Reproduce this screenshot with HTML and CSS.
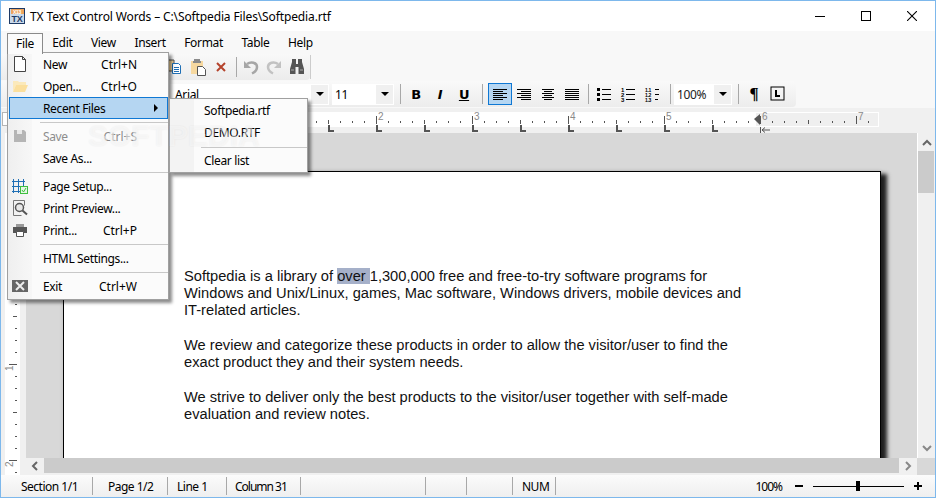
FILE: index.html
```html
<!DOCTYPE html>
<html lang="en">

<head>
    <meta charset="UTF-8" />
    <title>TX Text Control Words</title>
    <link rel="stylesheet" href="styles.css">
</head>

<body>
    <div class="window">
        <div class="titlebar">
            <svg class="app-icon" width="16" height="16" viewBox="0 0 16 16">
                <rect x="0.5" y="0.5" width="15" height="15" fill="#c9d9ea" stroke="#1d3a66" />
                <rect x="2" y="1" width="13" height="5" fill="#eda45c" />
                <text x="8" y="5.5" class="app-icon-year">X13</text>
                <text x="8" y="14" class="app-icon-text">TX</text>
            </svg>
            <span class="title-text">TX Text Control Words – C:\Softpedia Files\Softpedia.rtf</span>
            <div class="win-controls">
                <div class="win-btn"><svg width="10" height="10"><path d="M0 5.5h10" stroke="#000" /></svg></div>
                <div class="win-btn"><svg width="10" height="10"><rect x="0.5" y="0.5" width="9" height="9" fill="none" stroke="#000" /></svg></div>
                <div class="win-btn"><svg width="10" height="10"><path d="M0 0l10 10M10 0l-10 10" stroke="#000" stroke-width="1.1" /></svg></div>
            </div>
        </div>

        <div class="menubar">
            <div class="menu-title open">File</div>
            <div class="menu-title">Edit</div>
            <div class="menu-title">View</div>
            <div class="menu-title">Insert</div>
            <div class="menu-title">Format</div>
            <div class="menu-title">Table</div>
            <div class="menu-title">Help</div>
        </div>

        <div class="toolbar-row row-main">
            <div class="toolbar toolbar-main">
                <div class="tb-btn">
                    <svg width="16" height="16" viewBox="0 0 16 16">
                        <path d="M1 1h6v11H1z" fill="#f7d9a0" stroke="#555" />
                        <path d="M5.5 4.5h6l2 2v8h-8z" fill="#fff" stroke="#1f6fb5" />
                        <path d="M7 8.5h5M7 10.5h5M7 12.5h5" stroke="#1f6fb5" />
                    </svg>
                </div>
                <div class="tb-btn">
                    <svg width="16" height="18" viewBox="0 0 16 18">
                        <path d="M1 3h12v13H1z" fill="#f7d9a0" />
                        <path d="M4 3V1h6v2h1v2H3V3z" fill="#8b8b8b" />
                        <path d="M7.5 8.5h5l3 3v6h-8z" fill="#fff" stroke="#555" />
                    </svg>
                </div>
                <div class="tb-btn">
                    <svg width="12" height="12" viewBox="0 0 12 12"><path d="M2 2l8 8M10 2l-8 8" stroke="#b5432c" stroke-width="2" /></svg>
                </div>
                <div class="sep sep-main"></div>
                <div class="tb-btn">
                    <svg width="16" height="16" viewBox="0 0 16 16">
                        <path d="M1 2v7h7z" fill="#a6a6a6" />
                        <path d="M4 5c4-3 10-1.500 10 3 0 3-2 5-5 6.500" stroke="#a6a6a6" stroke-width="2.500" fill="none" />
                    </svg>
                </div>
                <div class="tb-btn">
                    <svg width="16" height="16" viewBox="0 0 16 16">
                        <path d="M15 2v7H8z" fill="#c2c2c2" />
                        <path d="M12 5C8 2 2 3.500 2 8c0 3 2 5 5 6.500" stroke="#c2c2c2" stroke-width="2.500" fill="none" />
                    </svg>
                </div>
                <div class="tb-btn">
                    <svg width="16" height="16" viewBox="0 0 16 16">
                        <path d="M3 0h4v5h2V0h4v3l2 7v5H9.500V8h-3v7H1v-5l2-7z" fill="#555" />
                        <path d="M2 11h3M11 11h3" stroke="#aaa" />
                    </svg>
                </div>
                <div class="sep sep-end"></div>
            </div>
        </div>

        <div class="toolbar-row row-format">
            <div class="toolbar toolbar-format">
                <div class="combo combo-font"><span>Arial</span><div class="combo-btn"><i class="caret"></i></div></div>
                <div class="combo combo-size"><span>11</span><div class="combo-btn"><i class="caret"></i></div></div>
                <div class="sep"></div>
                <div class="tb-btn glyph-b">B</div>
                <div class="tb-btn glyph-i">I</div>
                <div class="tb-btn glyph-u">U</div>
                <div class="sep sep-wide"></div>
                <div class="tb-btn active">
                    <svg width="16" height="16"><path d="M1 3.500h14M1 5.500h10M1 7.500h14M1 9.500h10M1 11.500h14M1 13.500h10" stroke="#000" /></svg>
                </div>
                <div class="tb-btn">
                    <svg width="16" height="16"><path d="M1 3.500h14M5 5.500h10M1 7.500h14M5 9.500h10M1 11.500h14M5 13.500h10" stroke="#000" /></svg>
                </div>
                <div class="tb-btn">
                    <svg width="16" height="16"><path d="M2 3.500h12M4 5.500h8M2 7.500h12M4 9.500h8M2 11.500h12M4 13.500h8" stroke="#000" /></svg>
                </div>
                <div class="tb-btn">
                    <svg width="16" height="16"><path d="M1 3.500h14M1 5.500h14M1 7.500h14M1 9.500h14M1 11.500h14M1 13.500h14" stroke="#000" /></svg>
                </div>
                <div class="sep sep-tight"></div>
                <div class="tb-btn">
                    <svg width="16" height="16">
                        <path d="M1 2h3v3H1zM1 7h3v3H1zM1 12h3v3H1z" fill="#000" />
                        <path d="M6 3.500h9M6 8.500h9M6 13.500h9" stroke="#000" />
                    </svg>
                </div>
                <div class="tb-btn">
                    <svg width="16" height="16">
                        <text x="1" y="6" class="list-num">1</text>
                        <text x="1" y="11" class="list-num">2</text>
                        <text x="1" y="16" class="list-num">3</text>
                        <path d="M6 3.500h9M6 8.500h9M6 13.500h9" stroke="#000" />
                    </svg>
                </div>
                <div class="tb-btn">
                    <svg width="16" height="16">
                        <text x="1" y="6" class="list-num small">1.1</text>
                        <text x="1" y="11" class="list-num small">1.2</text>
                        <text x="1" y="16" class="list-num small">1.3</text>
                        <path d="M11 3.500h4M11 8.500h4M11 13.500h3" stroke="#000" />
                    </svg>
                </div>
                <div class="sep"></div>
                <div class="combo combo-zoom"><span>100%</span><div class="combo-btn"><i class="caret"></i></div></div>
                <div class="sep"></div>
                <div class="tb-btn glyph-p">¶</div>
                <div class="tb-btn">
                    <svg width="16" height="16">
                        <rect x="1" y="1" width="13" height="13" fill="none" stroke="#000" />
                        <path d="M6 4v6h4" fill="none" stroke="#000" stroke-width="2" />
                    </svg>
                </div>
            </div>
        </div>

        <svg class="ruler-top" width="934" height="25" viewBox="1 108 934 25">
            <rect x="2.500" y="112.500" width="752" height="13" fill="#fff" stroke="#b5b5b5" />
            <rect x="7" y="112" width="748" height="15" fill="#fff" />
            <rect x="755.500" y="112.500" width="123" height="14" fill="#efefef" stroke="#fff" />
            <path d="M316 122h1M340 122h1M352 122h1M364 122h1M388 122h1M400 122h1M412 122h1M436 122h1M448 122h1M460 122h1M484 122h1M496 122h1M508 122h1M532 122h1M544 122h1M556 122h1M580 122h1M592 122h1M604 122h1M628 122h1M640 122h1M652 122h1M676 122h1M688 122h1M700 122h1M724 122h1M736 122h1M748 122h1M772 122h1M784 122h1M796 122h1M820 122h1M832 122h1M844 122h1M868 122h1" stroke="#555" stroke-width="2" />
            <path d="M328.500 120v4M424.500 120v4M520.500 120v4M616.500 120v4M712.500 120v4M808.500 120v4" stroke="#555" />
            <path d="M376.500 116v8M472.500 116v8M568.500 116v8M664.500 116v8M760.500 116v8M856.500 116v8" stroke="#555" />
            <text x="378" y="120" class="ruler-num">2</text>
            <text x="474" y="120" class="ruler-num">3</text>
            <text x="570" y="120" class="ruler-num">4</text>
            <text x="666" y="120" class="ruler-num">5</text>
            <text x="762" y="120" class="ruler-num">6</text>
            <text x="858" y="120" class="ruler-num">7</text>
            <path d="M329 125v6h5M377 125v6h5M425 125v6h5M473 125v6h5M521 125v6h5M569 125v6h5M617 125v6h5M665 125v6h5M713 125v6h5" stroke="#555" stroke-width="2" fill="none" />
            <path d="M754 119l6-5v11z" fill="#555" />
            <path d="M760.500 127v6M770 130h-8M765 127.500l-3 2.500 3 2.500" stroke="#555" fill="none" />
        </svg>

        <div class="main">
            <svg class="ruler-left" width="25" height="342" viewBox="1 133 25 342">
                <rect x="5" y="133" width="15" height="342" fill="#fff" />
                <path d="M15 304.500h2M15 328.500h2M15 340.500h2M15 352.500h2M15 376.500h2M15 388.500h2M15 400.500h2M15 424.500h2M15 436.500h2M15 448.500h2M15 472.500h2" stroke="#555" />
                <path d="M13 316.500h4M13 412.500h4M9 364.500h8M9 460.500h8" stroke="#555" />
                <text x="0" y="0" class="ruler-num" transform="translate(13 371) rotate(-90)">1</text>
                <text x="0" y="0" class="ruler-num" transform="translate(13 467) rotate(-90)">2</text>
            </svg>

            <div class="doc-area">
                <div class="page">
                    <p>Softpedia is a library of <span class="selected">over </span>1,300,000 free and free-to-try software programs for<br>Windows and Unix/Linux, games, Mac software, Windows drivers, mobile devices and<br>IT-related articles.</p>
                    <p>We review and categorize these products in order to allow the visitor/user to find the<br>exact product they and their system needs.</p>
                    <p>We strive to deliver only the best products to the visitor/user together with self-made<br>evaluation and review notes.</p>
                </div>
            </div>

            <div class="vscroll">
                <div class="scroll-btn"><svg width="10" height="8"><path d="M1 7l4-4 4 4" fill="none" stroke="#666" stroke-width="2" /></svg></div>
                <div class="vthumb"></div>
                <div class="scroll-btn scroll-btn-end"><svg width="10" height="8"><path d="M1 1l4 4 4-4" fill="none" stroke="#888" stroke-width="2" /></svg></div>
            </div>

            <div class="hscroll">
                <div class="scroll-btn"><svg width="8" height="10"><path d="M6 1L2 5l4 4" fill="none" stroke="#666" stroke-width="2" /></svg></div>
                <div class="hthumb"></div>
                <div class="scroll-btn"><svg width="8" height="10"><path d="M2 1l4 4-4 4" fill="none" stroke="#888" stroke-width="2" /></svg></div>
            </div>
            <div class="scroll-corner"></div>
        </div>

        <div class="statusbar">
            <div class="cell cell-section">Section 1/1</div>
            <div class="cell cell-page">Page 1/2</div>
            <div class="cell cell-line">Line 1</div>
            <div class="cell cell-col">Column 31</div>
            <div class="cell cell-e1"></div>
            <div class="cell cell-e2"></div>
            <div class="cell cell-e3"></div>
            <div class="cell cell-num">NUM</div>
            <div class="zoom-box">
                <span class="zoom-value">100%</span>
                <svg class="zoom-minus" width="8" height="10"><path d="M0 5h8" stroke="#000" stroke-width="2" /></svg>
                <svg class="zoom-slider" width="91" height="10"><path d="M0 5.500h91" stroke="#000" /><rect x="43" y="0" width="4" height="10" fill="#000" /></svg>
                <svg class="zoom-plus" width="8" height="8"><path d="M0 4h8M4 0v8" stroke="#000" stroke-width="2" /></svg>
            </div>
        </div>

        <!-- open menus -->
        <div class="menu file-menu">
            <div class="menu-row">
                <div class="mi-icon"><svg width="16" height="16"><path d="M2.500 0.500h8l3 3v12h-11zM10.500 0.500v3h3" fill="#fff" stroke="#444" /></svg></div>
                <span>New</span><span class="shortcut">Ctrl+N</span>
            </div>
            <div class="menu-row">
                <div class="mi-icon"><svg width="16" height="16"><path d="M1 3h5l1 1h7v3H4l-3 7z" fill="#fbe9bb" /><path d="M1 14l3-7h12l-3 7z" fill="#fbdf9d" /></svg></div>
                <span>Open...</span><span class="shortcut">Ctrl+O</span>
            </div>
            <div class="menu-row active">
                <div class="mi-icon"></div>
                <span>Recent Files</span><i class="arrow-right"></i>
            </div>
            <div class="menu-sep"></div>
            <div class="menu-row disabled">
                <div class="mi-icon"><svg width="16" height="16"><path d="M2 2h10l2 2v10H2z" fill="#b5b5b5" /><rect x="5" y="2" width="5" height="4" fill="#e9e9e9" /></svg></div>
                <span>Save</span><span class="shortcut">Ctrl+S</span>
            </div>
            <div class="menu-row">
                <div class="mi-icon"></div>
                <span>Save As...</span>
            </div>
            <div class="menu-sep"></div>
            <div class="menu-row">
                <div class="mi-icon"><svg width="16" height="16"><path d="M1.500 1v14M11.500 1v7M6.500 1v14M0 3.500h13M0 8.500h9M0 13.500h8" stroke="#1f6fb5" fill="none" /><rect x="8.500" y="8.500" width="7" height="7" fill="#e4f7e4" stroke="#3fbf3f" /><path d="M10 12l1.500 2 2.500-4" stroke="#3fbf3f" fill="none" /></svg></div>
                <span>Page Setup...</span>
            </div>
            <div class="menu-row">
                <div class="mi-icon"><svg width="16" height="16"><path d="M1.500 0.500h11v5M1.500 0.500v15h8" fill="none" stroke="#777" /><circle cx="7.500" cy="7.500" r="4" fill="#e8e8e8" stroke="#555" stroke-width="1.500" /><path d="M10.500 10.500l4.500 4" stroke="#555" stroke-width="2" /></svg></div>
                <span>Print Preview...</span>
            </div>
            <div class="menu-row">
                <div class="mi-icon"><svg width="16" height="16"><path d="M4 2h8v3H4z" fill="#999" /><path d="M1 5h14v6H1z" fill="#555" /><path d="M4.500 9.500h7v5h-7z" fill="#fff" stroke="#555" /></svg></div>
                <span>Print...</span><span class="shortcut">Ctrl+P</span>
            </div>
            <div class="menu-sep"></div>
            <div class="menu-row">
                <div class="mi-icon"></div>
                <span>HTML Settings...</span>
            </div>
            <div class="menu-sep"></div>
            <div class="menu-row">
                <div class="mi-icon"><svg width="16" height="12"><rect width="16" height="12" fill="#666" /><path d="M4 2l8 8M12 2l-8 8" stroke="#eee" stroke-width="2" /></svg></div>
                <span>Exit</span><span class="shortcut">Ctrl+W</span>
            </div>
        </div>

        <div class="menu recent-menu">
            <div class="menu-row"><span>Softpedia.rtf</span></div>
            <div class="menu-row"><span>DEMO.RTF</span></div>
            <div class="menu-sep"></div>
            <div class="menu-row"><span>Clear list</span></div>
        </div>

        <div class="watermark">SOFTPEDIA</div>
    </div>
</body>

</html>
```

FILE: styles.css
```css
:root {
    --ui-font: 'Noto Sans', sans-serif;
    --border-blue: #7db8ec;
    --panel: #f0f0f0;
    --bar: #f8f8f8;
    --workspace: #d8d8d8;
    --thumb: #cbcbcb;
    --sep: #a8a8a8;
    --menu-border: #a0a0a0;
}

* {
    margin: 0;
    padding: 0;
    box-sizing: border-box;
}

body {
    width: 936px;
    height: 498px;
    overflow: hidden;
    background: #fff;
}

.window {
    position: relative;
    width: 936px;
    height: 498px;
    border: 1px solid var(--border-blue);
    font-family: var(--ui-font);
    font-size: 12px;
    letter-spacing: -0.35px;
    color: #000;
    display: flex;
    flex-direction: column;
    overflow: hidden;
}

svg {
    display: block;
    flex-shrink: 0;
}

/* title bar */
.titlebar {
    height: 30px;
    background: #fff;
    display: flex;
    align-items: center;
    padding-left: 8px;
}

.app-icon-year {
    font: bold 5px 'Liberation Sans', sans-serif;
    fill: #fff;
    text-anchor: middle;
}

.app-icon-text {
    font: bold 9px 'Liberation Sans', sans-serif;
    fill: #1d3a66;
    text-anchor: middle;
}

.title-text {
    margin-left: 5px;
    white-space: nowrap;
    letter-spacing: -0.125px;
}

.win-controls {
    margin-left: auto;
    display: flex;
}

.win-btn {
    width: 46px;
    height: 30px;
    display: flex;
    align-items: center;
    justify-content: center;
}

/* menu bar */
.menubar {
    height: 22px;
    background: var(--bar);
    display: flex;
    padding-left: 6px;
    padding-top: 2px;
}

.menu-title {
    padding: 0 9.300px;
    line-height: 19px;
    height: 20px;
}

.menu-title.open {
    border: 1px solid #8a8a8a;
    border-bottom: none;
    padding: 0;
    width: 36px;
    text-align: center;
    background: #fbfbfb;
    position: relative;
    z-index: 5;
    height: 21px;
}

/* toolbars */
.toolbar-row {
    background: var(--bar);
}

.row-main {
    height: 28px;
    padding-top: 1px;
}

.row-format {
    height: 27px;
}

.toolbar {
    display: flex;
    align-items: center;
    background: linear-gradient(#f9f9f9, #ececec);
    border-radius: 0 4px 4px 0;
}

.toolbar-main {
    width: 309px;
    height: 26px;
    padding-left: 162px;
}

.toolbar-main .tb-btn {
    width: 23px;
}

.toolbar-format {
    width: 795px;
    height: 26px;
    padding-left: 169px;
}

.tb-btn {
    width: 24px;
    height: 22px;
    display: flex;
    align-items: center;
    justify-content: center;
    flex-shrink: 0;
}

.tb-btn.active {
    background: #b5d6f2;
    border: 1px solid #0f78d4;
}

.glyph-b,
.glyph-i,
.glyph-u {
    font: bold 13px 'DejaVu Sans', sans-serif;
}

.glyph-i {
    font-style: italic;
}

.glyph-u {
    text-decoration: underline;
}

.glyph-p {
    font: bold 17px 'Liberation Serif', serif;
}

.list-num {
    font: bold 6px 'Liberation Sans', sans-serif;
    fill: #000;
}

.list-num.small {
    font-size: 5px;
}

.sep {
    width: 1px;
    height: 20px;
    background: var(--sep);
    margin: 0 3px 0 6px;
    flex-shrink: 0;
}

.sep-main {
    margin: 0 2px 0 4px;
}

.sep-end {
    margin: 0 0 0 2px;
    height: 24px;
    background: #ccc;
}

.sep-wide {
    margin-right: 5px;
}

.sep-tight {
    margin-left: 4px;
}

.combo {
    height: 21px;
    background: #fff;
    display: flex;
    align-items: center;
    padding-left: 3px;
    flex-shrink: 0;
}

.combo span {
    flex: 1;
}

.combo-btn {
    width: 17px;
    height: 19px;
    margin-right: 1px;
    background: var(--panel);
    display: flex;
    align-items: center;
    justify-content: center;
}

.caret {
    width: 0;
    height: 0;
    border-left: 4px solid transparent;
    border-right: 4px solid transparent;
    border-top: 4px solid #000;
}

.combo-font {
    width: 159px;
    margin-right: 3px;
    padding-left: 5px;
}

.combo-size {
    width: 62px;
}

.combo-zoom {
    width: 58px;
}

.combo-zoom span {
    color: #222;
}

/* rulers */
.ruler-top {
    background: var(--panel);
    height: 25px;
}

.ruler-num {
    font: 10px 'Liberation Sans', sans-serif;
    fill: #8a8a8a;
}

.main {
    height: 342px;
    display: grid;
    grid-template-columns: 25px 891px 18px;
    grid-template-rows: 325px 17px;
}

.ruler-left {
    grid-row: 1 / 3;
    background: var(--panel);
}

/* document */
.doc-area {
    background: var(--workspace);
    overflow: hidden;
    padding: 38px 0 0 37px;
}

.page {
    width: 818px;
    height: 420px;
    background: #fff;
    border: 1px solid #000;
    box-shadow: 0 0 4px rgba(0, 0, 0, 0.12), 6px 3px 4px rgba(0, 0, 0, 0.85);
    padding: 96px 0 0 120px;
    font: 14.67px/17px 'Liberation Sans', sans-serif;
    letter-spacing: 0;
    color: #111;
    white-space: nowrap;
}

.page p {
    margin-bottom: 18px;
}

.selected {
    background: #a5b0c9;
}

/* scrollbars */
.vscroll {
    background: var(--panel);
    border-left: 1px solid #fff;
    display: flex;
    flex-direction: column;
}

.scroll-btn {
    flex-shrink: 0;
    display: flex;
    align-items: center;
    justify-content: center;
}

.vscroll .scroll-btn {
    height: 18px;
}

.scroll-btn-end {
    margin-top: auto;
}

.vthumb {
    height: 42px;
    background: var(--thumb);
    margin-right: 1px;
}

.hscroll {
    grid-column: 2;
    background: var(--panel);
    display: flex;
    padding-bottom: 2px;
}

.hscroll .scroll-btn {
    width: 18px;
}

.hthumb {
    flex: 1;
    background: var(--thumb);
}

.scroll-corner {
    background: var(--workspace);
}

/* status bar */
.statusbar {
    height: 22px;
    background: linear-gradient(#fbfbfb, #efefef);
    display: flex;
    align-items: center;
    white-space: nowrap;
    letter-spacing: -0.5px;
}

.cell {
    height: 18px;
    line-height: 19px;
    border-right: 1px solid var(--sep);
    flex-shrink: 0;
}

.cell-section { width: 92px; padding-left: 20px; }
.cell-page { width: 75px; padding-left: 15px; }
.cell-line { width: 59px; padding-left: 9px; }
.cell-col { width: 74px; padding-left: 8px; letter-spacing: -1px; }
.cell-e1 { width: 125px; }
.cell-e2 { width: 41px; }
.cell-e3 { width: 46px; }
.cell-num { width: 43px; padding-left: 9px; }

.zoom-box {
    margin-left: auto;
    padding-right: 13px;
    display: flex;
    align-items: center;
}

.zoom-value {
    letter-spacing: -1px;
}

.zoom-minus {
    margin-left: 13px;
}

.zoom-slider {
    margin-left: 10px;
}

.zoom-plus {
    margin-left: 10px;
}

/* open menus */
.menu {
    position: absolute;
    background: #fbfbfb;
    border: 1px solid var(--menu-border);
    box-shadow: 3px 3px 3px rgba(0, 0, 0, 0.45);
    z-index: 4;
}

.file-menu {
    left: 6px;
    top: 51px;
    width: 162px;
    height: 248px;
    background: linear-gradient(to right, #efefef, #f7f7f7 24px, #fbfbfb 24px);
}

.recent-menu {
    left: 168px;
    top: 97px;
    width: 139px;
    height: 75px;
    background: linear-gradient(to right, #f3f3f3 24px, #fbfbfb 24px);
    z-index: 6;
}

.menu-row {
    height: 22px;
    display: flex;
    align-items: center;
    white-space: nowrap;
}

.recent-menu .menu-row {
    padding-left: 34px;
}

.mi-icon {
    width: 35px;
    padding-left: 4px;
    flex-shrink: 0;
}

.shortcut {
    margin-left: auto;
    margin-right: 31px;
    letter-spacing: 0;
}

.menu-row.disabled {
    color: #8d8d8d;
}

.menu-row.active {
    margin-left: 1px;
    border: 1px solid #0f78d4;
    background: #b5d6f2;
}

.menu-row.active .mi-icon {
    width: 33px;
}

.arrow-right {
    margin-left: auto;
    margin-right: 9px;
    width: 0;
    height: 0;
    border-top: 4px solid transparent;
    border-bottom: 4px solid transparent;
    border-left: 4px solid #000;
}

.menu-sep {
    height: 1px;
    background: #c8c8c8;
    margin: 3px 0 2px 32px;
}

.recent-menu .menu-sep {
    margin: 4px 0 1px 31px;
}

.watermark {
    position: absolute;
    left: 87px;
    top: 120px;
    z-index: 7;
    font: bold 30px/30px 'Liberation Sans', sans-serif;
    letter-spacing: 0;
    color: rgba(255, 255, 255, 0.5);
    text-shadow: 0 0 2px rgba(0, 0, 0, 0.07);
    pointer-events: none;
}
```
